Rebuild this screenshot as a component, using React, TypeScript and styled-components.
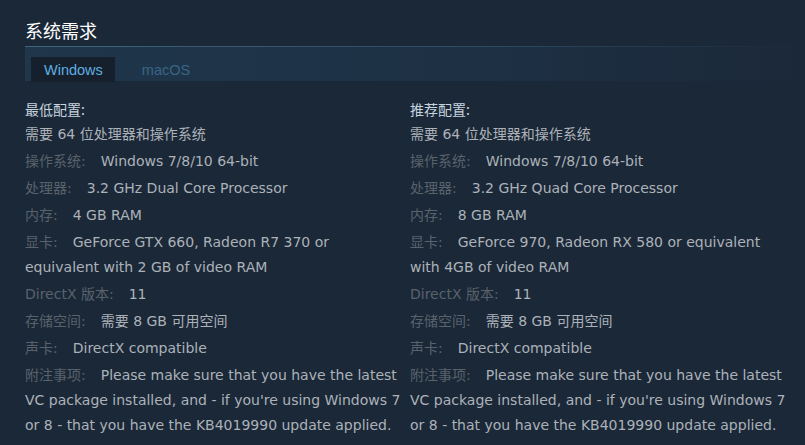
import React from 'react';
import styled, { createGlobalStyle } from 'styled-components';

const GlobalStyle = createGlobalStyle`
  html, body {
    margin: 0;
    padding: 0;
    background: #1b2838;
  }
  body {
    font-family: "DejaVu Sans", "Noto Sans CJK SC", sans-serif;
  }
`;

const Page = styled.div`
  width: 805px;
  height: 445px;
  overflow: hidden;
  background: #1b2838;
  padding: 16px 0 0 25px;
  box-sizing: border-box;
`;

const Title = styled.h2`
  margin: 0;
  font-size: 18px;
  font-weight: normal;
  line-height: 29px;
  color: #ffffff;
  font-family: "Noto Sans CJK SC", sans-serif;
`;

const TabBar = styled.div`
  margin-top: 1px;
  height: 35px;
  box-sizing: border-box;
  padding: 10px 0 0 6px;
  display: flex;
  border-top: 1px solid transparent;
  border-image: linear-gradient(to right, #3f6580 0%, #2d4a60 60%, #1b2838 100%) 1;
  background: linear-gradient(to right, #1f364b 0%, #1d3044 60%, #1b2838 100%);
`;

const Tab = styled.div<{ $active?: boolean }>`
  height: 25px;
  padding: 0 12px 0 13px;
  display: flex;
  align-items: center;
  font-family: "Liberation Sans", Arial, sans-serif;
  font-size: 14.5px;
  color: ${({ $active }) => ($active ? '#5eaee0' : '#3a6585')};
  background: ${({ $active }) => ($active ? '#16202d' : 'transparent')};
  & + & {
    margin-left: 14px;
  }
`;

const Columns = styled.div`
  display: grid;
  grid-template-columns: 376px 376px;
  column-gap: 9px;
  margin-top: 16px;
`;

const Column = styled.div`
  font-size: 14px;
  color: #acb2b8;
`;

const Heading = styled.div`
  line-height: 25px;
  color: #c6d4df;
  font-family: "Noto Sans CJK SC", sans-serif;
`;

const List = styled.ul`
  list-style: none;
  margin: 0;
  padding: 0;
`;

const Item = styled.li`
  line-height: 25px;
  margin-bottom: 2px;
`;

const Label = styled.span`
  color: #59626b;
  margin-right: 15px;
`;

type Spec = { label?: string; value: string };

const NOTES =
  "Please make sure that you have the latest VC package installed, and - if you're using Windows 7 or 8 - that you have the KB4019990 update applied.";

const MIN: Spec[] = [
  { value: '需要 64 位处理器和操作系统' },
  { label: '操作系统:', value: 'Windows 7/8/10 64-bit' },
  { label: '处理器:', value: '3.2 GHz Dual Core Processor' },
  { label: '内存:', value: '4 GB RAM' },
  { label: '显卡:', value: 'GeForce GTX 660, Radeon R7 370 or equivalent with 2 GB of video RAM' },
  { label: 'DirectX 版本:', value: '11' },
  { label: '存储空间:', value: '需要 8 GB 可用空间' },
  { label: '声卡:', value: 'DirectX compatible' },
  { label: '附注事项:', value: NOTES },
];

const REC: Spec[] = [
  { value: '需要 64 位处理器和操作系统' },
  { label: '操作系统:', value: 'Windows 7/8/10 64-bit' },
  { label: '处理器:', value: '3.2 GHz Quad Core Processor' },
  { label: '内存:', value: '8 GB RAM' },
  { label: '显卡:', value: 'GeForce 970, Radeon RX 580 or equivalent with 4GB of video RAM' },
  { label: 'DirectX 版本:', value: '11' },
  { label: '存储空间:', value: '需要 8 GB 可用空间' },
  { label: '声卡:', value: 'DirectX compatible' },
  { label: '附注事项:', value: NOTES },
];

const SpecColumn: React.FC<{ heading: string; specs: Spec[] }> = ({ heading, specs }) => (
  <Column>
    <Heading>{heading}</Heading>
    <List>
      {specs.map((s, i) => (
        <Item key={i}>
          {s.label && <Label>{s.label}</Label>}
          {s.value}
        </Item>
      ))}
    </List>
  </Column>
);

const App: React.FC = () => {
  return (
    <Page>
      <GlobalStyle />
      <Title>系统需求</Title>
      <TabBar>
        <Tab $active>Windows</Tab>
        <Tab>macOS</Tab>
      </TabBar>
      <Columns>
        <SpecColumn heading="最低配置:" specs={MIN} />
        <SpecColumn heading="推荐配置:" specs={REC} />
      </Columns>
    </Page>
  );
};

export default App;
